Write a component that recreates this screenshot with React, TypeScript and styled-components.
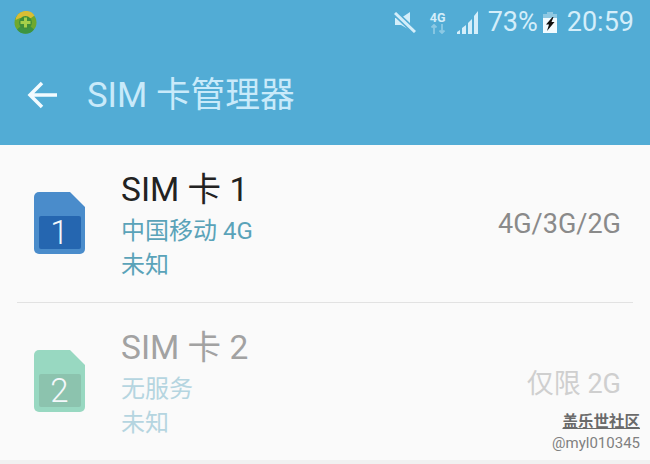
import React from 'react'
import styled, { createGlobalStyle } from 'styled-components'

const GlobalStyle = createGlobalStyle`
  html, body {
    margin: 0;
    padding: 0;
    background: #fafafa;
  }
  body {
    font-family: Roboto, "Noto Sans CJK SC", sans-serif;
  }
`

const Screen = styled.main`
  position: relative;
  width: 650px;
  height: 464px;
  overflow: hidden;
  background: #fafafa;
`

const Header = styled.header`
  height: 145px;
  background: #52acd5;
  color: #d4eefa;
`

const StatusBar = styled.div`
  display: flex;
  align-items: center;
  height: 44px;
  padding: 0 16px 0 14px;
`

const StatusRight = styled.div`
  display: flex;
  align-items: center;
  margin-left: auto;
`

const StatusSlot = styled.span<{ $gap: number }>`
  display: flex;
  margin-left: ${(p) => p.$gap}px;
`

const StatusText = styled.span<{ $gap: number }>`
  font-size: 27px;
  line-height: 44px;
  margin-left: ${(p) => p.$gap}px;
`

const NetworkStack = styled.span`
  display: flex;
  flex-direction: column;
  align-items: center;
  width: 18px;
  margin-left: 13px;
`

const NetworkLabel = styled.span`
  font-size: 12.5px;
  font-weight: 700;
  line-height: 13px;
`

const TitleBar = styled.div`
  display: flex;
  align-items: center;
  height: 101px;
  padding-left: 27px;
`

const Title = styled.h1`
  margin: 0 0 0 28px;
  font-size: 34.7px;
  font-weight: 400;
  line-height: 40px;
  color: #c9eafa;
`

const Row = styled.section<{ $height: number; $divider?: boolean }>`
  display: flex;
  align-items: center;
  box-sizing: border-box;
  height: ${(p) => p.$height}px;
  margin: 0 17px;
  padding: 0 12px 0 17px;
  border-bottom: ${(p) => (p.$divider ? '1px solid #e2e2e2' : 'none')};
`

const SimBadge = styled.div`
  position: relative;
  flex: none;
  width: 51px;
  height: 62px;
  margin-bottom: 2px;
`

const SimNumber = styled.span`
  position: absolute;
  left: 0;
  right: 0;
  top: 23px;
  text-align: center;
  font-size: 33px;
  font-weight: 300;
  line-height: 36px;
  color: #f4f8fb;
`

const Info = styled.div`
  margin: 4px 0 0 36px;
  display: flex;
  flex-direction: column;
`

const Name = styled.div<{ $off?: boolean }>`
  font-size: 33.5px;
  line-height: 40px;
  margin-bottom: 4px;
  color: ${(p) => (p.$off ? '#a2a2a2' : '#222222')};
`

const Sub = styled.div<{ $off?: boolean }>`
  font-size: 24px;
  line-height: 34px;
  color: ${(p) => (p.$off ? '#b5d5e0' : '#5aa3b9')};
`

const Network = styled.div<{ $off?: boolean }>`
  margin-left: auto;
  font-size: 27px;
  color: ${(p) => (p.$off ? '#cfcfcf' : '#8a8a8a')};
`

const BottomStrip = styled.div`
  height: 4px;
  background: #f1f1f1;
`

const Watermark = styled.div`
  position: absolute;
  right: 10px;
  bottom: 11px;
  text-align: right;
`

const WatermarkTitle = styled.div`
  font-size: 15.5px;
  line-height: 22px;
  font-weight: 700;
  color: #6a6a6a;
  text-decoration: underline;
`

const WatermarkUser = styled.div`
  font-size: 15px;
  line-height: 20px;
  color: #808080;
`

const AppLogo = () => (
  <svg width="23" height="23" viewBox="0 0 23 23">
    <circle cx="11.5" cy="11.5" r="11" fill="#6fa82e" />
    <path d="M1.5 9a10.5 10.5 0 0 1 19-4.5L17 7H6z" fill="#d9bd35" />
    <path d="M3 18.5a10.5 10.5 0 0 0 17 0L16 15H7z" fill="#3d9440" />
    <circle cx="11.5" cy="11.5" r="6.5" fill="#3f8f3a" />
    <path d="M10 6.5h3V10h3.5v3H13v3.5h-3V13H6.5v-3H10z" fill="#a5cf4a" />
  </svg>
)

const MuteIcon = () => (
  <svg width="22" height="21" viewBox="0 0 22 21">
    <path d="M1 6h6l9-6v18l-9-5H1z" fill="#d4eefa" />
    <path d="M1 1l20 19" stroke="#52acd5" strokeWidth="6" />
    <path d="M1 1l20 19" stroke="#d4eefa" strokeWidth="3" />
  </svg>
)

const TransferArrows = () => (
  <svg width="18" height="10" viewBox="0 0 18 10">
    <path d="M5 1v9M2.5 3.500L5 1l2.500 2.500" stroke="#8cc9e4" strokeWidth="1.800" fill="none" />
    <path d="M13 0v9M10.500 6.500L13 9l2.500-2.500" stroke="#8cc9e4" strokeWidth="1.800" fill="none" />
  </svg>
)

const SignalIcon = () => (
  <svg width="22" height="24" viewBox="0 0 22 24">
    <path
      d="M0 24v-2l3-2v4zM5 24v-6l4-3v9zM11 24V13l4-4v15zM17 24V6l4-5v23z"
      fill="#d4eefa"
    />
  </svg>
)

const BatteryIcon = () => (
  <svg width="14" height="21" viewBox="0 0 14 21">
    <path d="M4 0h6v2h4v5H0V2h4z" fill="#8fc8e2" />
    <path d="M0 6h14v15H0z" fill="#f2fbff" />
    <path d="M9.500 5L3 12.500h3L4 19l7.500-9H8.500l2-5z" fill="#111111" />
  </svg>
)

const BackArrow = () => (
  <svg width="32" height="30" viewBox="0 0 32 30">
    <path d="M30 15H4M15 3L3 15l12 12" stroke="#f2fbff" strokeWidth="3.5" fill="none" />
  </svg>
)

const SimShape = ({ body, chip }: { body: string; chip: string }) => (
  <svg width="51" height="62" viewBox="0 0 51 62">
    <path
      d="M5 0h31l15 15v42a5 5 0 0 1-5 5H5a5 5 0 0 1-5-5V5a5 5 0 0 1 5-5z"
      fill={body}
    />
    <path d="M7 24h38a2 2 0 0 1 2 2v29a2 2 0 0 1-2 2H7a2 2 0 0 1-2-2V26a2 2 0 0 1 2-2z" fill={chip} />
  </svg>
)

const SimRow = ({
  index,
  height,
  carrier,
  network,
  body,
  chip,
  off,
  divider,
}: {
  index: number
  height: number
  carrier: string
  network: string
  body: string
  chip: string
  off?: boolean
  divider?: boolean
}) => (
  <Row $height={height} $divider={divider}>
    <SimBadge>
      <SimShape body={body} chip={chip} />
      <SimNumber>{index}</SimNumber>
    </SimBadge>
    <Info>
      <Name $off={off}>SIM 卡 {index}</Name>
      <Sub $off={off}>{carrier}</Sub>
      <Sub $off={off}>未知</Sub>
    </Info>
    <Network $off={off}>{network}</Network>
  </Row>
)

export default function App() {
  return (
    <Screen>
      <GlobalStyle />
      <Header>
        <StatusBar>
          <AppLogo />
          <StatusRight>
            <StatusSlot $gap={0}>
              <MuteIcon />
            </StatusSlot>
            <NetworkStack>
              <NetworkLabel>4G</NetworkLabel>
              <TransferArrows />
            </NetworkStack>
            <StatusSlot $gap={10}>
              <SignalIcon />
            </StatusSlot>
            <StatusText $gap={9}>73%</StatusText>
            <StatusSlot $gap={5}>
              <BatteryIcon />
            </StatusSlot>
            <StatusText $gap={10}>20:59</StatusText>
          </StatusRight>
        </StatusBar>
        <TitleBar>
          <BackArrow />
          <Title>SIM 卡管理器</Title>
        </TitleBar>
      </Header>
      <SimRow index={1} height={158} carrier="中国移动 4G" network="4G/3G/2G" body="#4a8ccb" chip="#2566b0" divider />
      <SimRow index={2} height={157} carrier="无服务" network="仅限 2G" body="#98d8c1" chip="#8cc3ae" off />
      <BottomStrip />
      <Watermark>
        <WatermarkTitle>盖乐世社区</WatermarkTitle>
        <WatermarkUser>@myl010345</WatermarkUser>
      </Watermark>
    </Screen>
  )
}
